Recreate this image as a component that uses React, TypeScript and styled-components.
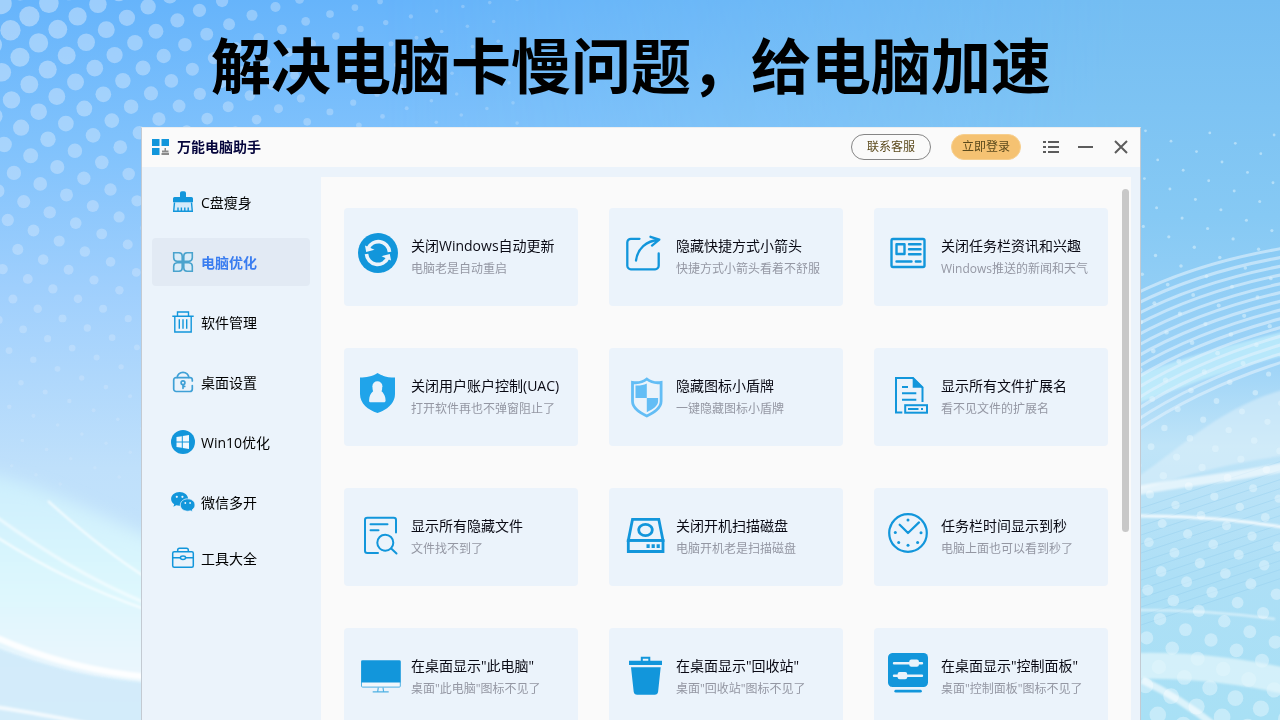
import React from "react";
import styled, { createGlobalStyle } from "styled-components";

const BLUE = "#1296db";

const GlobalStyle = createGlobalStyle`
  *, *::before, *::after { box-sizing: border-box; }
  body {
    margin: 0;
    font-family: "Open Sans", "Noto Sans CJK SC", sans-serif;
    color: #000;
  }
  button { font: inherit; color: inherit; border: 0; background: none; padding: 0; cursor: pointer; }
`;

const Page = styled.main`
  position: relative;
  isolation: isolate;
  display: flex;
  flex-direction: column;
  height: 100vh;
  overflow: hidden;
`;

const Backdrop = styled.svg`
  position: absolute;
  inset: 0;
  z-index: -1;
  width: 100%;
  height: 100%;
`;

const Headline = styled.h1`
  margin: 23px 18px 24px 0;
  font-family: "Noto Sans CJK SC", sans-serif;
  font-size: 60px;
  line-height: 80px;
  font-weight: 700;
  text-align: center;
`;

const AppWindow = styled.section`
  flex: 1 0 auto;
  display: flex;
  flex-direction: column;
  margin: 0 139px 0 141px;
  background: #ebf3fb;
  border: 1px solid #c3cad2;
  border-top-color: #eceef0;
  border-bottom: 0;
`;

const TitleBar = styled.header`
  display: flex;
  align-items: center;
  height: 39px;
  padding: 0 2px 2px 10px;
  background: #fafafa;
`;

const AppName = styled.h2`
  flex: 1;
  margin: 0 0 0 8px;
  font-size: 14px;
  line-height: 20px;
  font-weight: 700;
  color: #05053c;
`;

const PillButton = styled.button<{ $filled?: boolean }>`
  width: ${(p) => (p.$filled ? 70 : 80)}px;
  height: 26px;
  margin-right: ${(p) => (p.$filled ? 12 : 20)}px;
  border: 1px solid ${(p) => (p.$filled ? "#f7cf8e" : "#858585")};
  border-radius: 13px;
  background: ${(p) => (p.$filled ? "#f5c272" : "#fafafa")};
  color: #5b4a1c;
  font-size: 12px;
  line-height: 16px;
`;

const WindowButton = styled.button`
  display: grid;
  place-items: center;
  width: 35px;
  height: 30px;
`;

const Body = styled.div`
  flex: 1;
  display: grid;
  grid-template-columns: 179px 1fr;
  padding-right: 9px;
`;

const Sidebar = styled.nav`
  display: flex;
  flex-direction: column;
  gap: 12px;
  padding: 11px 11px 0 10px;
`;

const NavItem = styled.button<{ $active?: boolean; $short?: boolean }>`
  display: flex;
  align-items: center;
  gap: 6px;
  height: ${(p) => (p.$short ? 40 : 48)}px;
  padding-left: 19px;
  border-radius: 4px;
  background: ${(p) => (p.$active ? "#e2eaf4" : "transparent")};
  color: ${(p) => (p.$active ? "#3a7df0" : "#000")};
  font-size: 14px;
  line-height: 20px;
  font-weight: ${(p) => (p.$active ? 700 : 400)};
`;

const NavLabel = styled.span`
  padding-top: 1px;
`;

const Content = styled.div`
  display: flex;
  align-items: flex-start;
  margin-top: 10px;
  padding: 0 2px 0 23px;
  background: #fafafa;
`;

const CardGrid = styled.div`
  flex: 1;
  display: grid;
  grid-template-columns: repeat(3, 1fr);
  gap: 42px 31px;
  margin: 31px 14px 31px 0;
`;

const ScrollThumb = styled.div`
  width: 7px;
  height: 343px;
  margin-top: 12px;
  border-radius: 4px;
  background: #c8c8c8;
`;

const Card = styled.button`
  display: flex;
  align-items: flex-start;
  gap: 9px;
  height: 98px;
  padding: 23px 0 0 14px;
  border-radius: 4px;
  background: #ebf3fb;
  text-align: left;
  white-space: nowrap;
`;

const CardIcon = styled.svg`
  flex: none;
  width: 44px;
  height: 48px;
`;

const CardText = styled.span`
  display: flex;
  flex-direction: column;
  gap: 2px;
  padding-top: 4px;
`;

const CardTitle = styled.span`
  font-size: 14px;
  line-height: 21px;
  color: #0a0a14;
`;

const CardNote = styled.span`
  font-size: 12px;
  line-height: 22px;
  color: #9497a3;
`;

type Point = { x: number; y: number; r: number; o: number };

function leftDots(): Point[] {
  const dots: Point[] = [];
  for (let k = -18; k <= 22; k++) {
    const bx = 143 - 20.4 * k + 0.28 * k * k;
    const by = 68 + 12.4 * k + 0.37 * k * k;
    const c = Math.max(-8, Math.min(14, k));
    for (let a = -22; a <= 26; a++) {
      const x = bx + a * (28.4 - 0.3 * c);
      const y = by + a * (12.9 - 0.27 * c);
      if (x < -12 || x > 520 || y < -12 || y > 490) continue;
      const d = Math.hypot(x, y);
      const r = Math.max(1.8, 10.8 - 0.021 * d);
      dots.push({ x, y, r, o: Math.max(0.24, 0.52 - d * 0.0005) });
    }
  }
  return dots;
}

function rightDots(): Point[] {
  const dots: Point[] = [];
  for (let k = -32; k <= 8; k++) {
    for (let a = -26; a <= 20; a++) {
      const x = 1211 + a * 25.5 - k * 13.3;
      const y = 640 + a * 10.4 + k * 18.7;
      if (x < 1130 || x > 1290 || y < 130 || y > 730) continue;
      const t = (y - 130) / 590;
      dots.push({ x, y, r: 1.4 + t * t * 7, o: 0.5 });
    }
  }
  return dots;
}

const LEFT_DOTS = leftDots();
const RIGHT_DOTS = rightDots();
const ARCS = Array.from({ length: 14 }, (_, i) => i);

function Background() {
  return (
    <Backdrop viewBox="0 0 1280 720" preserveAspectRatio="xMidYMid slice" aria-hidden="true">
      <defs>
        <linearGradient id="sky" x1="0" y1="0" x2="0" y2="1">
          <stop offset="0" stopColor="#66b4fb" />
          <stop offset="0.2" stopColor="#80c2fc" />
          <stop offset="0.4" stopColor="#9fcffd" />
          <stop offset="0.65" stopColor="#bfe0fb" />
          <stop offset="1" stopColor="#cfeafb" />
        </linearGradient>
        <linearGradient id="east" x1="0" y1="0" x2="0" y2="1">
          <stop offset="0" stopColor="#74bdf2" />
          <stop offset="0.3" stopColor="#86c9f4" />
          <stop offset="0.5" stopColor="#9dd3f7" />
          <stop offset="0.62" stopColor="#bfe4f8" />
          <stop offset="0.8" stopColor="#addff6" />
          <stop offset="1" stopColor="#a8e0f5" />
        </linearGradient>
        <linearGradient id="eastFade" x1="0" y1="0" x2="1" y2="0">
          <stop offset="0.3" stopColor="#fff" stopOpacity="0" />
          <stop offset="0.88" stopColor="#fff" />
        </linearGradient>
        <mask id="eastMask">
          <rect width="1280" height="720" fill="url(#eastFade)" />
        </mask>
        <linearGradient id="mist" x1="0" y1="0" x2="0" y2="1">
          <stop offset="0" stopColor="#cbeefd" />
          <stop offset="0.4" stopColor="#dcf7fd" />
          <stop offset="0.65" stopColor="#e8f6fd" />
          <stop offset="1" stopColor="#f6fafd" />
        </linearGradient>
        <filter id="soft" x="-20%" y="-20%" width="140%" height="140%">
          <feGaussianBlur stdDeviation="8" />
        </filter>
        <filter id="smooth" x="-20%" y="-20%" width="140%" height="140%">
          <feGaussianBlur stdDeviation="1" />
        </filter>
      </defs>
      <rect width="1280" height="720" fill="url(#sky)" />
      <rect width="1280" height="720" fill="url(#east)" mask="url(#eastMask)" />
      <g fill="#d9eafc">
        {LEFT_DOTS.map((d, i) => (
          <circle key={i} cx={d.x} cy={d.y} r={d.r} opacity={d.o} />
        ))}
      </g>
      <path d="M-40 468C40 480 90 512 200 560V760H-40Z" fill="url(#mist)" filter="url(#soft)" />
      <path d="M-10 645C40 664 90 680 170 684V760H-10Z" fill="#cfeafa" filter="url(#smooth)" opacity=".85" />
      <g fill="none" stroke="#fff" filter="url(#smooth)">
        <path d="M-5 516C45 552 90 580 150 605" strokeWidth="3" opacity=".55" />
        <path d="M-5 536C45 568 90 590 150 611" strokeWidth="2" opacity=".8" />
        <path d="M48 501C80 530 110 555 150 580" strokeWidth="2" opacity=".8" />
        <path d="M-5 637C40 657 90 672 150 677" strokeWidth="6" opacity=".9" />
        <path d="M-5 707C30 712 50 716 90 724" strokeWidth="4" opacity=".7" />
      </g>
      <g filter="url(#smooth)">
        <path d="M1130 378C1180 358 1230 345 1290 330V354C1230 368 1180 388 1130 406Z" fill="#cffaff" opacity=".55" />
        <path d="M1130 482C1180 450 1220 405 1290 388V455C1230 462 1180 476 1130 494Z" fill="#e1f1fb" opacity=".5" />
      </g>
      <g fill="none" stroke="#e3f2fd" strokeWidth="3" opacity=".6">
        {ARCS.map((i) => (
          <path
            key={i}
            d={`M1135 ${294 + i * 10.6}Q1200 ${262 + i * 9.7} 1285 ${248 + i * 8.7}`}
          />
        ))}
      </g>
      <g fill="none" stroke="#8ecbee" strokeWidth="1" opacity=".35">
        {ARCS.map((i) => (
          <path key={i} d={`M1135 ${510 + i * 9}L1285 ${460 + i * 9}`} />
        ))}
      </g>
      <g fill="#e4f5fd">
        {RIGHT_DOTS.map((d, i) => (
          <circle key={i} cx={d.x} cy={d.y} r={d.r} opacity={d.o} />
        ))}
      </g>
      <g fill="none" stroke="#fff" filter="url(#smooth)">
        <path d="M1135 491C1180 482 1220 480 1290 466" strokeWidth="9" opacity=".6" />
        <path d="M1135 516Q1210 515 1290 528" strokeWidth="3" opacity=".85" />
        <path d="M1135 610Q1210 610 1275 619" strokeWidth="2" opacity=".6" />
        <path d="M1135 666Q1210 664 1290 682" strokeWidth="26" stroke="#e2f6fb" opacity=".75" />
        <path d="M1142 680Q1180 698 1215 726" strokeWidth="7" opacity=".6" />
      </g>
    </Backdrop>
  );
}

const stroke = (w: number) => ({
  fill: "none",
  stroke: BLUE,
  strokeWidth: w,
  strokeLinecap: "round" as const,
  strokeLinejoin: "round" as const,
});

const LogoIcon = () => (
  <svg width="17" height="18" viewBox="0 0 17 18" aria-hidden="true">
    <path d="M0 1h7.500v7H0zM9.500 1H17v7H9.500zM0 10h7.500v7H0z" fill={BLUE} />
    <path d="M12.500 10h1.500v2.500h2.500V15H17v2H9.500v-2h.5v-2.500h2.500z" fill="#8b8b8b" />
    <path d="M10 14.500h6.500" stroke="#fafafa" strokeWidth=".5" />
  </svg>
);

const navIcons = {
  brush: (
    <>
      <path d="M2.500 12h19v9.500h-19z" fill="#d3eafa" />
      <path d="M9 7V3a1.800 1.800 0 0 1 1.800-1.700h2.400A1.800 1.800 0 0 1 15 3v4h5.500A1.500 1.500 0 0 1 22 8.500v3.800H2V8.500A1.500 1.500 0 0 1 3.500 7z" fill={BLUE} />
      <path d="M3.500 12.500L2.700 21.200h18.600l-.8-8.700M7 21v-3.500M10.400 21v-3.500M13.800 21v-3.500M17.200 21v-3.500" fill="none" stroke={BLUE} strokeWidth="1.400" />
    </>
  ),
  clover: (
    <g fill="#d9ecf8" stroke="#4aa3cd" strokeWidth="1.600">
      <path d="M11.200 11.200H6A3.600 3.600 0 0 1 2.700 7.700V2.700H8A3.300 3.300 0 0 1 11.200 6z" />
      <path d="M12.800 11.200H18a3.600 3.600 0 0 0 3.300-3.500v-5H16A3.300 3.300 0 0 0 12.800 6z" />
      <path d="M11.200 12.800H6a3.600 3.600 0 0 0-3.300 3.500v5H8a3.300 3.300 0 0 0 3.200-3.300z" />
      <path d="M12.800 12.800H18a3.600 3.600 0 0 1 3.300 3.500v5H16a3.300 3.300 0 0 1-3.200-3.300z" />
    </g>
  ),
  bin: (
    <g fill="none" stroke={BLUE} strokeWidth="1.400">
      <path d="M1.300 6.200h21.400M6.500 6V2h11v4M3.800 6.200V22h16.400V6.200M8.300 9.300v9.500M12 9.300v9.500M15.700 9.300v9.500" />
    </g>
  ),
  lock: (
    <g fill="none" stroke="#3fa0d6" strokeWidth="1.700" strokeLinecap="round">
      <path d="M21.300 11V9.800A2.300 2.300 0 0 0 19 7.700H5A2.300 2.300 0 0 0 2.700 10v9A2.500 2.500 0 0 0 5.200 21.500h13.600a2.500 2.500 0 0 0 2.500-2.500v-3.500" />
      <path d="M6.200 7.500a5.800 5.200 0 0 1 11.600 0" />
      <circle cx="12" cy="12.800" r="1.900" />
      <path d="M12 14.800v3.500M12.300 16.400h1.400" />
    </g>
  ),
  windows: (
    <>
      <circle cx="12" cy="12" r="12" fill={BLUE} />
      <path d="M5.500 7l5.300-.8v5.300H5.500zM11.800 6l6.200-1v6.500h-6.200zM5.500 12.500h5.300v5.300L5.500 17zM11.800 12.500H18V19l-6.200-1z" fill="#f2f8fd" />
    </>
  ),
  wechat: (
    <>
      <path d="M8.600 2C3.900 2 .1 5 .1 8.900c0 2.200 1.200 4.100 3.100 5.400l-.8 2.400 2.800-1.500c1 .3 2.200.5 3.400.5 4.700 0 8.500-3 8.500-6.800S13.300 2 8.600 2z" fill={BLUE} />
      <path d="M16.700 8.800c-4.100 0-7.400 2.700-7.400 6.200s3.300 6.200 7.400 6.200c.9 0 1.800-.1 2.600-.4l2.300 1.300-.6-2.100c1.800-1.100 3-2.900 3-5 0-3.500-3.200-6.200-7.300-6.200z" fill={BLUE} stroke="#ebf3fb" strokeWidth=".8" />
      <g fill="#ebf3fb">
        <circle cx="5.800" cy="6.800" r="1.100" />
        <circle cx="11.400" cy="6.800" r="1.100" />
        <circle cx="14.300" cy="13" r=".9" />
        <circle cx="19.100" cy="13" r=".9" />
      </g>
    </>
  ),
  toolbox: (
    <g fill="none" stroke={BLUE} strokeWidth="1.500">
      <rect x="1.700" y="5.700" width="20.600" height="15.600" rx="1.500" />
      <path d="M6.700 5.500V4a1.800 1.800 0 0 1 1.800-1.800h7A1.800 1.800 0 0 1 17.300 4v1.500M1.700 11.800h7.800M14.500 11.800h7.800" />
      <ellipse cx="12" cy="11.800" rx="2.600" ry="1.700" />
    </g>
  ),
};

const cardIcons = {
  sync: (
    <>
      <circle cx="20" cy="22" r="20" fill={BLUE} />
      {[0, 180].map((turn) => (
        <g key={turn} transform={`rotate(${turn} 20 22)`}>
          <path d="M10 17.500A11.200 11.200 0 0 1 31.500 21" fill="none" stroke="#ebf3fb" strokeWidth="3.600" />
          <path d="M7 14.500l1.200 6.500 8.300-2.200z" fill="#ebf3fb" />
        </g>
      ))}
    </>
  ),
  shortcut: (
    <g {...stroke(2.3)}>
      <path d="M16.500 7.800H8A3.600 3.600 0 0 0 4.300 11.500v23.200A3.600 3.600 0 0 0 8 38.300h24a3.600 3.600 0 0 0 3.700-3.600V22.500" />
      <path d="M13 29.500C14.500 18 23 9.500 36 9M27.500 5.800L36.300 8.700 29 14.600" />
    </g>
  ),
  news: (
    <g {...stroke(2.4)}>
      <rect x="3.500" y="8" width="33" height="28" rx="1.500" />
      <rect x="8.500" y="13.300" width="8" height="9.700" />
      <path d="M21 13.300h11.500M21 18.300h11.500M21 23.300h11.500M8.500 30.500h15M27.800 30.500h4.700" />
    </g>
  ),
  account: (
    <>
      <path d="M19.500 2C14.500 5.500 8 6.500 2 6.500V23c0 9.500 8 16 17.500 19C29 39 37 32.500 37 23V6.500C31 6.500 24.500 5.500 19.500 2z" fill="#20a4ea" />
      <path d="M12.800 31.300c-1.200 0-1.800-.7-1.700-1.800.1-4.200 1.500-7.300 4-9.200a6.300 6.300 0 0 1-.4-3.600 4.800 6 0 0 1 9.400 0 6.300 6.300 0 0 1-.6 3.600c2.500 1.900 4 5 4.100 9.200 0 1.100-.6 1.800-1.700 1.800z" fill="#ebf3fb" />
      <circle cx="19.400" cy="15.300" r="5" fill="#ebf3fb" />
    </>
  ),
  shield: (
    <>
      <path d="M23.800 8c-4 3.200-9 4.300-14.300 3.500v18.800c0 7 7.500 11.200 14.300 14.700 6.800-3.500 14.300-7.700 14.300-14.700V11.500C32.800 12.300 27.800 11.200 23.800 8z" fill="none" stroke="#63bdf5" strokeWidth="2.800" />
      <path d="M23.800 12.500V27H12.500V14.500c4.300.2 8-.3 11.300-2zM23.800 27h11.300v3c0 5.500-5.500 8-11.300 11.300z" fill="#63bdf5" />
    </>
  ),
  extension: (
    <>
      <g fill="none" stroke={BLUE} strokeWidth="2">
        <path d="M14.300 41.500H8V7h17l9.500 9.500V31" />
        <rect x="17.200" y="34.200" width="21.800" height="7.500" />
        <path d="M14 16h6M14 22.300h14.300M14 28.700h14.300M20 38h10.500M33 38h2" />
      </g>
      <path d="M24.700 6l10.800 10.800H24.700z" fill={BLUE} />
    </>
  ),
  search: (
    <g {...stroke(2)}>
      <path d="M20 42H9.300A2.300 2.300 0 0 1 7 39.700V9a2.300 2.300 0 0 1 2.300-2.300h26.400A2.300 2.300 0 0 1 38 9v12.500M12.500 13.200h17M12.500 19.300h8" />
      <circle cx="27.300" cy="31.700" r="8" />
      <path d="M33.200 37.500l5.300 5" />
    </g>
  ),
  disk: (
    <>
      <g fill="none" stroke={BLUE} strokeWidth="2.800">
        <path d="M9.500 8.400h26.300L40 29.400H5.300z" />
        <path d="M5.300 29.400V40.500H40V29.400z" />
        <ellipse cx="22.500" cy="19" rx="6.800" ry="5.600" />
      </g>
      <path d="M23.500 33.300h3.200v3.600h-3.200zM28.600 33.300h3.200v3.600h-3.200zM33.600 33.300h3.200v3.600h-3.200z" fill={BLUE} />
    </>
  ),
  clock: (
    <>
      <g {...stroke(2.2)}>
        <circle cx="20" cy="22" r="18.800" />
        <path d="M11.700 13.700L20 22l11-10.600" />
      </g>
      <g fill={BLUE}>
        {[[20, 9], [7.3, 21.5], [33, 21.7], [10.7, 31.5], [29.6, 31.5], [20, 34.3]].map(([x, y]) => (
          <circle key={`${x}-${y}`} cx={x} cy={y} r="1.500" />
        ))}
      </g>
    </>
  ),
  monitor: (
    <>
      <rect x="3.500" y="9.800" width="38.800" height="26.300" rx="1" fill="#f1f7fc" stroke="#4fb1e4" />
      <path d="M3.300 9.500h39.200v22H3.300z" fill={BLUE} />
      <path d="M20.300 36.500l-.6 4M25 36.500l.6 4M14.700 40.800h16" fill="none" stroke="#4fb1e4" strokeWidth="1.200" />
    </>
  ),
  trash: (
    <>
      <path d="M18.800 10.500V6.700h7.500v3.800" fill="none" stroke={BLUE} strokeWidth="2" />
      <path d="M6 9.800h33V14H6zM8 16.300h29.700l-2.600 24.500a3.500 3.500 0 0 1-3.500 3H14.200a3.500 3.500 0 0 1-3.500-3z" fill={BLUE} />
    </>
  ),
  panel: (
    <>
      <rect y="2" width="40" height="34" rx="4.500" fill={BLUE} />
      <path d="M6 12.200h28M6 24.700h28" stroke="#ebf3fb" strokeWidth="2.400" strokeLinecap="round" />
      <rect x="21.300" y="8.600" width="9.600" height="7.200" rx="2" fill="#ebf3fb" />
      <rect x="9.600" y="21.100" width="9.600" height="7.200" rx="2" fill="#ebf3fb" />
      <path d="M7.800 40.200h24.600" {...stroke(2.8)} />
    </>
  ),
};

const navItems: { icon: keyof typeof navIcons; label: string }[] = [
  { icon: "brush", label: "C盘瘦身" },
  { icon: "clover", label: "电脑优化" },
  { icon: "bin", label: "软件管理" },
  { icon: "lock", label: "桌面设置" },
  { icon: "windows", label: "Win10优化" },
  { icon: "wechat", label: "微信多开" },
  { icon: "toolbox", label: "工具大全" },
];

const cards: { icon: keyof typeof cardIcons; title: string; note: string }[] = [
  { icon: "sync", title: "关闭Windows自动更新", note: "电脑老是自动重启" },
  { icon: "shortcut", title: "隐藏快捷方式小箭头", note: "快捷方式小箭头看着不舒服" },
  { icon: "news", title: "关闭任务栏资讯和兴趣", note: "Windows推送的新闻和天气" },
  { icon: "account", title: "关闭用户账户控制(UAC)", note: "打开软件再也不弹窗阻止了" },
  { icon: "shield", title: "隐藏图标小盾牌", note: "一键隐藏图标小盾牌" },
  { icon: "extension", title: "显示所有文件扩展名", note: "看不见文件的扩展名" },
  { icon: "search", title: "显示所有隐藏文件", note: "文件找不到了" },
  { icon: "disk", title: "关闭开机扫描磁盘", note: "电脑开机老是扫描磁盘" },
  { icon: "clock", title: "任务栏时间显示到秒", note: "电脑上面也可以看到秒了" },
  { icon: "monitor", title: '在桌面显示"此电脑"', note: '桌面"此电脑"图标不见了' },
  { icon: "trash", title: '在桌面显示"回收站"', note: '桌面"回收站"图标不见了' },
  { icon: "panel", title: '在桌面显示"控制面板"', note: '桌面"控制面板"图标不见了' },
];

export default function App() {
  return (
    <Page lang="zh-CN">
      <GlobalStyle />
      <Background />
      <Headline>解决电脑卡慢问题，给电脑加速</Headline>
      <AppWindow>
        <TitleBar>
          <LogoIcon />
          <AppName>万能电脑助手</AppName>
          <PillButton type="button">联系客服</PillButton>
          <PillButton type="button" $filled>立即登录</PillButton>
          <WindowButton type="button" aria-label="菜单">
            <svg width="16" height="14" viewBox="0 0 16 14" stroke="#5c5c5c" strokeWidth="2" aria-hidden="true">
              <path d="M0 2h3M5 2h11M0 7h3M5 7h11M0 12h3M5 12h11" />
            </svg>
          </WindowButton>
          <WindowButton type="button" aria-label="最小化">
            <svg width="15" height="14" viewBox="0 0 15 14" stroke="#5c5c5c" strokeWidth="2" aria-hidden="true">
              <path d="M0 7h15" />
            </svg>
          </WindowButton>
          <WindowButton type="button" aria-label="关闭">
            <svg width="14" height="14" viewBox="0 0 14 14" stroke="#5c5c5c" strokeWidth="2" aria-hidden="true">
              <path d="M1 1l12 12M13 1L1 13" />
            </svg>
          </WindowButton>
        </TitleBar>
        <Body>
          <Sidebar>
            {navItems.map((item, i) => (
              <NavItem
                key={item.label}
                type="button"
                $active={i === 1}
                $short={i === navItems.length - 1}
                aria-current={i === 1 ? "page" : undefined}
              >
                <svg width="24" height="24" viewBox="0 0 24 24" aria-hidden="true">
                  {navIcons[item.icon]}
                </svg>
                <NavLabel>{item.label}</NavLabel>
              </NavItem>
            ))}
          </Sidebar>
          <Content>
            <CardGrid>
              {cards.map((card) => (
                <Card key={card.title} type="button">
                  <CardIcon viewBox="0 0 44 48" aria-hidden="true">
                    {cardIcons[card.icon]}
                  </CardIcon>
                  <CardText>
                    <CardTitle>{card.title}</CardTitle>
                    <CardNote>{card.note}</CardNote>
                  </CardText>
                </Card>
              ))}
            </CardGrid>
            <ScrollThumb />
          </Content>
        </Body>
      </AppWindow>
    </Page>
  );
}
